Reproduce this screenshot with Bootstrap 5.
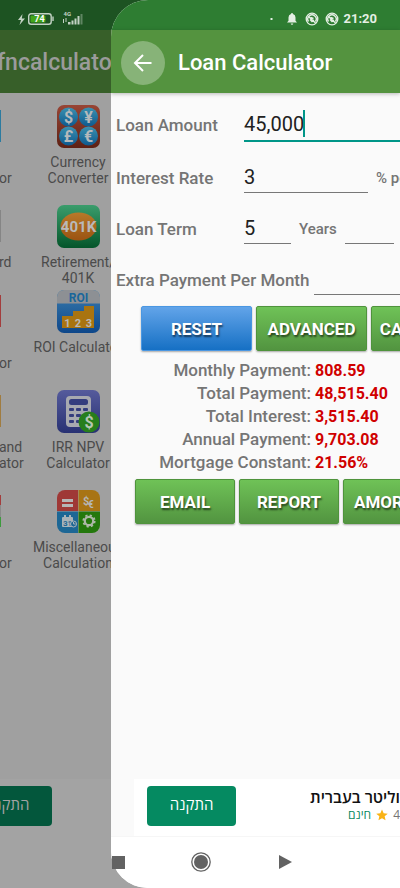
<!DOCTYPE html>
<html lang="en">
<head>
<meta charset="utf-8">
<meta name="viewport" content="width=device-width, initial-scale=1">
<title>Loan Calculator</title>
<link href="https://cdn.jsdelivr.net/npm/bootstrap@5.3.0/dist/css/bootstrap.min.css" rel="stylesheet">
<style>
body{font-family:Roboto,"Open Sans",sans-serif;background:#a0a0a0;color:#757575}
.screen{min-height:100vh}
.sysbar{height:30px}
.appbar{height:63px;padding-top:2px}
.under .sysbar{background:#1d5322}
.under .appbar{background:#375f29;color:#9b9b9b;font-size:23px;font-weight:500}
.under .appbar span{margin-left:-3px;padding-top:2px}
.tiles{display:grid;grid-template-columns:28px 100px;padding-top:12px}
.tile{height:100px;font-size:14px;line-height:16px;color:#4b4b4b}
.tile.short{height:85px}
.tile svg{width:43px;height:43px;margin-bottom:6px}
.edge{width:28px}
.edge .tile{padding-top:5px}
.edge i{display:block;width:1px;height:32px;margin-bottom:12px}
.edge span{display:block;margin-left:-1px;white-space:pre}
.e-blue{background:#2b7ba0}.e-grey{background:#858585}.e-red{background:#a33d3d}.e-gold{background:#a07c40}.e-mix{background:linear-gradient(#a33d3d 30%,#8b8b8b 30% 70%,#3c9a3c 70%)}
.under .adbar{background:#a3a3a3}
.under .install{background:#03573c;color:#a3a3a3;margin-left:-37px}
.adbar{height:57px;padding-bottom:4px}
.navpad{height:52px}
.under .navpad{background:#a3a3a3}
.install{width:89px;height:40px;background:#058a61;border:0;border-radius:4px;color:#fff;font-size:15px;font-family:"Open Sans",sans-serif;padding:0 0 2px}
.sheet{left:111px;background:#fafafa;border-radius:37px 0 0 37px}
.sheet .sysbar{background:#2e7d32}
.sheet .appbar{background:#54933f;color:#fff;padding-left:10px;gap:13px;box-shadow:0 1px 4px #0004}
.sheet h1{font-size:22px;font-weight:500;padding-top:2px}
.back{width:44px;height:44px;border:0;border-radius:50%;background:#87b378;color:#fff}
.back svg{width:24px;height:24px}
.fields{padding:6px 0 0 5px;font-size:17px;font-weight:500}
.rowline{height:51px;gap:8px;white-space:nowrap}
.rowline.tall{height:54px}
.rowline>*{flex-shrink:0}
.rowline .lbl{width:120px}
.rowline .lbl-long{width:190px}
.unit{font-size:15px;font-weight:500}
.fld{border:0;border-bottom:1px solid #777;border-radius:0;background:transparent;padding:0 0 2px;font-size:20px;line-height:24px;color:#212121;height:28px;outline:0;font-weight:400}
.fld.active{border-bottom:2px solid #009688;width:190px;height:32px}
.caret-line{left:187px;top:11px;width:2px;height:27px;background:#009688}
.w-rate{width:124px}.w-term{width:47px}.w-mon{width:49px}.w-extra{width:130px}
.act{height:45px;border:1px solid #4f933c;border-radius:2px;background:linear-gradient(#6fc257,#529440);color:#fff;font-size:17px;font-weight:700;text-shadow:1px 2px 2px #0009;box-shadow:0 1px 2px #0005;padding:2px 0 0;white-space:nowrap}
.act.blue{border-color:#4a97e2;background:linear-gradient(#62a4e9,#1670c4)}
.acts{gap:4px}
.one{padding-left:30px}.two{padding-left:24px;margin-top:5px}
.one .act{width:111px}.two .act{width:100px}
.two .act.wide{width:146px}
.results{display:grid;grid-template-columns:200px 1fr;column-gap:4px;font-size:17px;line-height:23px;margin-top:8px}
.results dt{text-align:right;white-space:nowrap;font-weight:500}
.results dd{margin:0;color:#d00000;font-weight:700;font-size:16px}
.sheet .adbar{background:#fff;margin-left:23px;padding-left:13px}
.sheet .navpad{background:#fff;border-top:1px solid #f6f6f6}
.adtext{font-family:"Open Sans",sans-serif;line-height:18px}
.adtext a{color:#111;font-size:16px;font-weight:600;text-decoration:none}
.adtext small{font-size:12px;gap:5px}
.free{color:#0b8a63}
.clock{font-size:13px;font-weight:700;line-height:14px}
.status{height:38px;padding:0 23px 0 17px;color:#e4efe4}
.sysnav{height:52px;color:#626262;padding-left:111px}
.sysnav button{border:0;background:transparent;padding:0;line-height:0;color:inherit}
.home{margin-left:65px}.prev{margin-left:67px}
</style>
<script src="https://cdn.jsdelivr.net/npm/bootstrap@5.3.0/dist/js/bootstrap.bundle.min.js"></script>
</head>
<body>
<div class="screen position-relative overflow-hidden d-flex flex-column">
  <div class="under d-flex flex-column flex-grow-1">
    <div class="sysbar"></div>
    <div class="appbar d-flex align-items-center"><span>fncalculator</span></div>
    <div class="tiles">
      <div class="edge"><div class="tile"><i class="e-blue"></i><span>
or</span></div></div>
      <div class="tile text-center">
        <svg viewBox="0 0 43 43"><defs><linearGradient id="ga" x2="0" y2="1"><stop stop-color="#984535"/><stop offset="1" stop-color="#5d2013"/></linearGradient><linearGradient id="gb" x2="0" y2="1"><stop stop-color="#3b91b0"/><stop offset="1" stop-color="#0e598e"/></linearGradient></defs><rect width="43" height="43" rx="7" fill="url(#ga)"/><g fill="url(#gb)"><circle cx="11.500" cy="12" r="9.500"/><circle cx="31.500" cy="12" r="9.500"/><circle cx="11.500" cy="31" r="9.500"/><circle cx="31.500" cy="31" r="9.500"/></g><g fill="#b5b9bb" font-family="Roboto" font-weight="700" font-size="16" text-anchor="middle"><text x="11.500" y="17.500">$</text><text x="31.500" y="17.500">¥</text><text x="11.500" y="36.500">£</text><text x="31.500" y="36.500">€</text></g></svg>
        <div>Currency<br>Converter</div></div>
      <div class="edge"><div class="tile short"><i class="e-grey"></i><span>rd</span></div></div>
      <div class="tile short text-center">
        <svg viewBox="0 0 43 43"><defs><linearGradient id="gc" x2="0" y2="1"><stop stop-color="#3a9d6c"/><stop offset="1" stop-color="#04552a"/></linearGradient><linearGradient id="gd" x2="0" y2="1"><stop stop-color="#b77929"/><stop offset="1" stop-color="#9b5312"/></linearGradient></defs><rect width="43" height="43" rx="7" fill="url(#gc)"/><ellipse cx="21.500" cy="21.500" rx="18" ry="14" fill="url(#gd)"/><text x="21.500" y="26.500" text-anchor="middle" fill="#b9b9b9" font-family="Roboto" font-weight="700" font-size="15">401K</text></svg>
        <div>Retirement/<br>401K</div></div>
      <div class="edge"><div class="tile"><i class="e-red"></i><span>
or</span></div></div>
      <div class="tile text-center">
        <svg viewBox="0 0 43 43"><defs><linearGradient id="ge" x2="0" y2="1"><stop stop-color="#397bad"/><stop offset="1" stop-color="#0e478a"/></linearGradient><clipPath id="ce"><rect width="43" height="43" rx="7"/></clipPath></defs><g clip-path="url(#ce)"><rect width="43" height="43" fill="url(#ge)"/><rect width="43" height="13.500" fill="#8d9094"/></g><text x="21.500" y="11.500" text-anchor="middle" fill="#19669b" font-family="Roboto" font-weight="700" font-size="12">ROI</text><path d="M5 38V26h11v-5h11v-5h10v22z" fill="#a97410"/><g fill="#b9b9b9" font-family="Roboto" font-weight="700" font-size="11" text-anchor="middle"><text x="10.500" y="37">1</text><text x="21" y="37">2</text><text x="32" y="37">3</text></g></svg>
        <div class="text-nowrap">ROI Calculator</div></div>
      <div class="edge"><div class="tile"><i class="e-gold"></i><span>and
ator</span></div></div>
      <div class="tile text-center">
        <svg viewBox="0 0 43 43"><defs><linearGradient id="gf" x2="0" y2="1"><stop stop-color="#555b9c"/><stop offset="1" stop-color="#283173"/></linearGradient></defs><rect width="43" height="43" rx="7" fill="url(#gf)"/><rect x="9" y="6" width="25" height="31" rx="4" fill="#a7a9b0"/><g fill="#343d7e"><rect x="12" y="9" width="19" height="6" rx="2.500"/><rect x="12" y="18" width="5" height="3" rx="1"/><rect x="19" y="18" width="5" height="3" rx="1"/><rect x="26" y="18" width="5" height="3" rx="1"/><rect x="12" y="24" width="5" height="3" rx="1"/><rect x="19" y="24" width="5" height="3" rx="1"/><rect x="12" y="30" width="5" height="3" rx="1"/><rect x="19" y="30" width="5" height="3" rx="1"/></g><circle cx="32" cy="32" r="10.500" fill="#277e1c"/><text x="32" y="38" text-anchor="middle" fill="#b7c6b4" font-family="Roboto" font-weight="700" font-size="16">$</text></svg>
        <div>IRR NPV<br>Calculator</div></div>
      <div class="edge"><div class="tile"><i class="e-mix"></i><span>
or</span></div></div>
      <div class="tile text-center">
        <svg viewBox="0 0 43 43"><defs><clipPath id="cg"><rect width="43" height="43" rx="8"/></clipPath></defs><g clip-path="url(#cg)"><rect width="21" height="21" fill="#9f3836"/><rect x="21.500" width="22" height="21" fill="#a87415"/><rect y="21.500" width="21" height="22" fill="#1d6795"/><rect x="21.500" y="21.500" width="22" height="22" fill="#24780d"/></g><path d="M5 10.500h11M5 15.500h11" stroke="#b6b6b6" stroke-width="3"/><g fill="#b6b6b6" font-family="Roboto" font-weight="700"><text x="26" y="15" font-size="11">$</text><text x="31" y="18" font-size="10">€</text></g><rect x="5" y="27" width="11" height="10" rx="1" fill="#aab3b8"/><path d="M8 25v3M13 25v3" stroke="#aab3b8" stroke-width="2"/><text x="6" y="36" font-family="Roboto" font-weight="700" font-size="8" fill="#1d6795">31</text><circle cx="16.500" cy="34" r="3" fill="#1d6795" stroke="#aab3b8"/><path d="M16.500 32v2h2" fill="none" stroke="#aab3b8"/><g fill="none" stroke="#aeb8a9"><circle cx="32" cy="31" r="4.200" stroke-width="2.200"/><circle cx="32" cy="31" r="5.700" stroke-width="1.800" stroke-dasharray="2.240"/></g></svg>
        <div>Miscellaneous Calculation</div></div>
    </div>
    <div class="adbar mt-auto d-flex align-items-center"><button class="install" dir="rtl">התקנה</button></div>
    <div class="navpad"></div>
  </div>

  <main class="sheet position-absolute top-0 bottom-0 end-0 overflow-hidden d-flex flex-column">
    <div class="sysbar"></div>
    <header class="appbar d-flex align-items-center">
      <button class="back p-0 flex-shrink-0" aria-label="Back"><svg viewBox="0 0 24 24" fill="none" stroke="currentColor" stroke-width="2"><path d="M20.500 12H5M12 4l-8 8 8 8"/></svg></button>
      <h1 class="mb-0 text-nowrap">Loan Calculator</h1>
    </header>
    <form class="fields">
      <div class="rowline tall d-flex align-items-center position-relative"><label class="lbl" for="amount">Loan Amount</label><input class="fld active" id="amount" value="45,000"><span class="caret-line position-absolute"></span></div>
      <div class="rowline d-flex align-items-center"><label class="lbl" for="rate">Interest Rate</label><input class="fld w-rate" id="rate" value="3"><span class="unit">% per year</span></div>
      <div class="rowline d-flex align-items-center"><label class="lbl" for="term">Loan Term</label><input class="fld w-term" id="term" value="5"><span class="unit">Years</span><input class="fld w-mon" aria-label="Months"></div>
      <div class="rowline d-flex align-items-center"><label class="lbl-long" for="extra">Extra Payment Per Month</label><input class="fld w-extra" id="extra"></div>
    </form>
    <div class="acts one d-flex"><button class="act blue flex-shrink-0">RESET</button><button class="act flex-shrink-0">ADVANCED</button><button class="act flex-shrink-0">CALCULATE</button></div>
    <dl class="results mb-0"><dt>Monthly Payment:</dt><dd>808.59</dd><dt>Total Payment:</dt><dd>48,515.40</dd><dt>Total Interest:</dt><dd>3,515.40</dd><dt>Annual Payment:</dt><dd>9,703.08</dd><dt>Mortgage Constant:</dt><dd>21.56%</dd></dl>
    <div class="acts two d-flex"><button class="act flex-shrink-0">EMAIL</button><button class="act flex-shrink-0">REPORT</button><button class="act wide flex-shrink-0">AMORTIZATION</button></div>
    <div class="adbar mt-auto d-flex align-items-center justify-content-between"><button class="install" dir="rtl">התקנה</button>
      <div class="adtext text-nowrap" dir="rtl"><a href="#">וליטר בעברית</a><small class="d-flex align-items-center">4<svg width="12" height="12" viewBox="0 0 24 24" fill="#f9b316"><path d="M12 1l3.300 7.500 8.200.8-6.200 5.400 1.800 8L12 18.500 4.900 22.700l1.800-8L.5 9.300l8.200-.8z"/></svg><span class="free">חינם</span></small></div></div>
    <div class="navpad"></div>
  </main>

  <div class="status position-absolute top-0 start-0 end-0 d-flex align-items-center justify-content-between">
    <svg width="70" height="18" viewBox="0 0 70 18" fill="#c3d2c4"><path d="M5.500 4L1 10h3l-1.500 5L8 8.500H4.800z"/><rect x="11.700" y="3.700" width="22.500" height="10.600" rx="2.500" fill="none" stroke="#c3d2c4" stroke-width="1.400"/><rect x="13.500" y="5.500" width="15" height="7" rx="1" fill="#42a51b"/><path d="M35.300 6.500h1.400v4.500h-1.400z"/><text x="22.500" y="12.200" font-family="Roboto" font-weight="700" font-size="9" text-anchor="middle" fill="#fff">74</text><text x="46.500" y="6" font-family="Roboto" font-weight="700" font-size="6">4G</text><path d="M46 9h1v4h-1zM48.500 8h1v4h-1zM51 14.500h2.500V12H51zM54.500 14.500h2v-4h-2zM57.500 14.500h2V8.500h-2zM60.500 14.500h2V6h-2z"/><path d="M63.500 14.500h2V4h-2z" opacity=".4"/></svg>
    <div class="d-flex align-items-center">
      <svg class="me-1" width="70" height="14" viewBox="0 0 70 14" fill="#e4efe4"><path d="M.5 6h2v2h-2z"/><path d="M17 10.500h10l-1.500-1.700V5.500A3.600 3.600 0 0 0 23 2a1 1 0 0 0-2 0 3.600 3.600 0 0 0-2.500 3.500v3.300zM20.700 11.500h2.600a1.300 1.300 0 0 1-2.600 0z"/><g fill="none" stroke="#e4efe4"><g id="nf"><circle cx="42" cy="7" r="5.800" stroke-width="1.300"/><path d="M38.500 9.500a4.200 4.200 0 1 1 7 0M38 4l7.500 7M40 7.500l2 2 2-1.500M40.500 5.500l3 1" stroke-width="1.400"/></g><use href="#nf" x="20"/></g></svg>
      <span class="clock">21:20</span>
    </div>
  </div>
  <nav class="sysnav position-absolute bottom-0 start-0 end-0 d-flex align-items-center" aria-label="System">
    <button aria-label="Recent apps"><svg width="14" height="14"><path d="M1 1h13v13H1z" fill="currentColor"/></svg></button>
    <button class="home" aria-label="Home"><svg width="22" height="22" viewBox="0 0 22 22"><circle cx="11" cy="11" r="9.200" fill="none" stroke="currentColor" stroke-width="1.300"/><circle cx="11" cy="11" r="7" fill="currentColor"/></svg></button>
    <button class="prev" aria-label="Go back"><svg width="13" height="16"><path d="M0 1l13 7-13 7z" fill="currentColor"/></svg></button>
  </nav>
</div>
</body>
</html>
